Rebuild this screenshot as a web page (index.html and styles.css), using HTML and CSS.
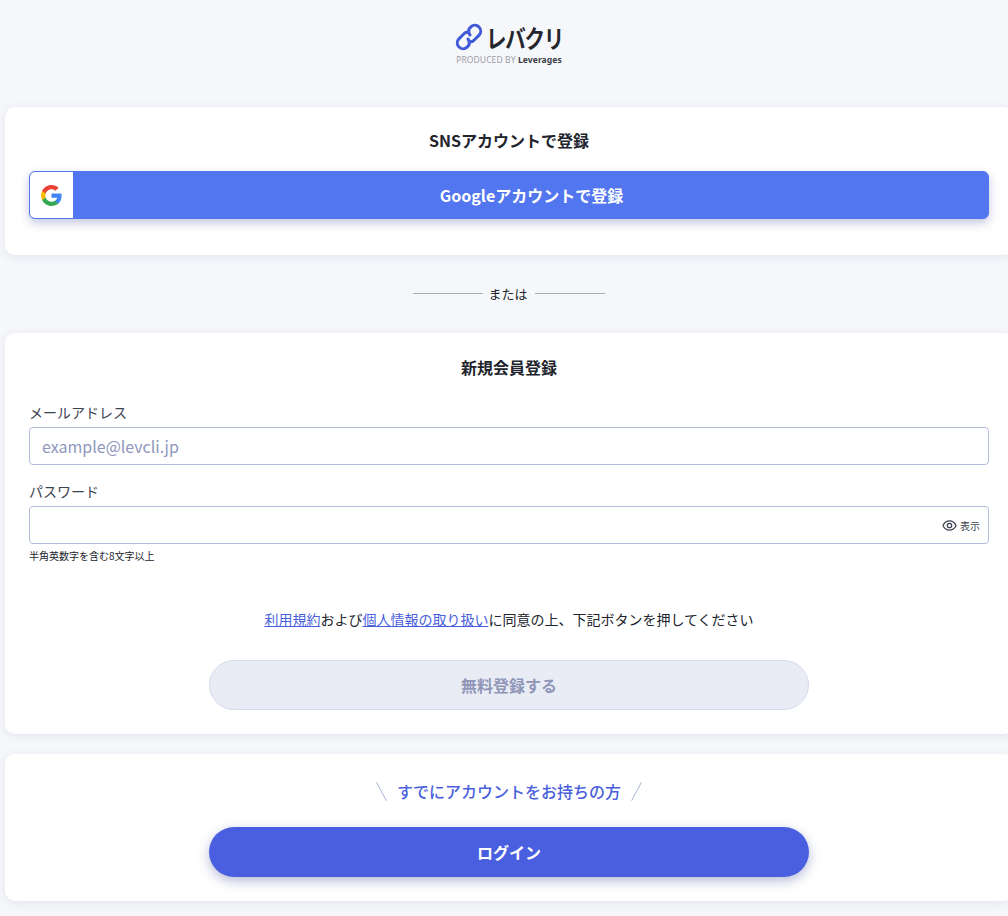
FILE: index.html
```html
<!DOCTYPE html>
<html lang="ja">
<head>
<meta charset="utf-8">
<title>レバクリ 新規会員登録</title>
<link rel="stylesheet" href="styles.css">
</head>
<body>
<main class="page">
  <header class="logo">
    <div class="logo-main">
      <svg class="logo-mark" width="28" height="28" viewBox="0 0 28 28" fill="none" stroke="#4059d8" stroke-width="3" stroke-linecap="round">
        <path d="M15 12 Q13 9.500 14 6 L15.900 3.900 A5.800 5.800 0 0 1 24.100 12.100 L18.500 17.700 Q16.800 19 15 18.500"/>
        <path d="M13 16 Q15 18.500 14 22 L12.100 24.100 A5.800 5.800 0 0 1 3.900 15.900 L9.500 10.300 Q11.200 9 13 9.500"/>
      </svg>
      <span class="logo-name">レバクリ</span>
    </div>
    <div class="logo-sub">PRODUCED BY <b>Leverages</b></div>
  </header>

  <section class="card card-sns">
    <h2 class="card-title">SNSアカウントで登録</h2>
    <a class="google-btn" href="#">
      <span class="google-icon">
        <svg width="23" height="23" viewBox="0 0 48 48">
          <path fill="#4285F4" d="M45.100 24.500c0-1.600-.1-3.100-.4-4.500H24v8.500h11.800c-.5 2.800-2 5.100-4.400 6.700v5.500h7.100c4.200-3.800 6.600-9.500 6.600-16.200z"/>
          <path fill="#34A853" d="M24 46c5.900 0 10.900-2 14.500-5.300l-7.100-5.500c-2 1.300-4.500 2.100-7.400 2.100-5.700 0-10.500-3.800-12.200-9H4.500v5.700C8.100 41.100 15.500 46 24 46z"/>
          <path fill="#FBBC05" d="M11.800 28.300c-.4-1.300-.7-2.800-.7-4.300s.3-3 .7-4.300V14H4.500C3 17 2.200 20.400 2.200 24s.8 7 2.300 10l7.300-5.700z"/>
          <path fill="#EA4335" d="M24 10.700c3.200 0 6.100 1.100 8.400 3.300l6.300-6.300C34.900 4.200 29.900 2 24 2 15.500 2 8.100 6.900 4.500 14l7.300 5.700c1.700-5.200 6.500-9 12.200-9z"/>
        </svg>
      </span>
      <span class="google-label">Googleアカウントで登録</span>
    </a>
  </section>

  <div class="divider"><span>または</span></div>

  <section class="card card-form">
    <h2 class="card-title">新規会員登録</h2>
    <label class="field-label">メールアドレス</label>
    <div class="input"><span class="placeholder">example@levcli.jp</span></div>
    <label class="field-label field-label-pw">パスワード</label>
    <div class="input input-pw">
      <span class="show-pw">
        <svg width="15" height="15" viewBox="0 0 24 24" fill="none" stroke="#3d4250" stroke-width="2">
          <path d="M1.500 12C4 6.800 7.700 4.500 12 4.500S20 6.800 22.500 12C20 17.200 16.300 19.500 12 19.500S4 17.200 1.500 12z"/>
          <circle cx="12" cy="12" r="3.500"/>
        </svg>
        <span>表示</span>
      </span>
    </div>
    <p class="hint">半角英数字を含む8文字以上</p>
    <p class="terms"><a href="#">利用規約</a>および<a href="#">個人情報の取り扱い</a>に同意の上、下記ボタンを押してください</p>
    <button class="btn btn-disabled" type="button">無料登録する</button>
  </section>

  <section class="card card-login">
    <p class="login-lead">すでにアカウントをお持ちの方</p>
    <button class="btn btn-primary" type="button">ログイン</button>
  </section>
</main>
</body>
</html>
```
FILE: styles.css
```css
* { box-sizing: border-box; }
html, body { margin: 0; padding: 0; overflow: hidden; }
body {
  height: 916px;
  background: #f6f7fa;
  color: #21242c;
  font-family: "Noto Sans CJK JP", "Noto Sans", sans-serif;
}
.page { width: 1008px; margin-left: 5px; display: flex; flex-direction: column; }

.logo { height: 107px; padding-top: 22px; display: flex; flex-direction: column; align-items: center; }
.logo-main { display: flex; align-items: center; height: 30px; gap: 3px; }
.logo-name {
  display: inline-block;
  font-size: 25px;
  font-weight: 700;
  line-height: 30px;
  letter-spacing: -1.500px;
  color: #23262d;
  transform: scaleX(.82);
  transform-origin: left center;
  margin-right: -17px;
}
.logo-sub { font-size: 8.500px; line-height: 12px; margin-top: 2px; color: #9a9da6; letter-spacing: .1px; font-family: "Noto Sans", sans-serif; }
.logo-sub b { color: #3a3d45; }

.card {
  background: #fff;
  border-radius: 10px;
  box-shadow: 0 2px 10px rgba(70, 80, 150, .1);
  padding: 0 24px;
  display: flex;
  flex-direction: column;
}
.card-title { margin: 0; font-size: 16px; font-weight: 700; line-height: 24px; text-align: center; }

.card-sns { height: 148px; padding-top: 21px; }
.google-btn {
  margin-top: 19px;
  height: 48px;
  display: flex;
  align-items: center;
  background: #5276f0;
  border: 1px solid #5276f0;
  border-radius: 6px;
  box-shadow: 0 4px 10px rgba(60, 70, 150, .3);
  text-decoration: none;
  overflow: hidden;
}
.google-icon { width: 43px; height: 46px; background: #fff; display: flex; align-items: center; justify-content: center; flex: none; }
.google-label { flex: 1; text-align: center; color: #fff; font-size: 16px; font-weight: 700; line-height: 24px; padding-left: 2px; }

.divider { height: 78px; padding-bottom: 2px; display: flex; align-items: center; justify-content: center; font-size: 13px; gap: 6px; color: #21242c; }
.divider span { margin-left: -1px; margin-right: 1px; }
.divider::before, .divider::after { content: ""; width: 70px; height: 1px; background: #a9acb6; }

.card-form { height: 401px; padding-top: 22px; }
.field-label { display: block; font-size: 14px; line-height: 20px; color: #3d4250; margin-top: 23px; }
.field-label-pw { margin-top: 16px; }
.input {
  margin-top: 5px;
  height: 38px;
  border: 1px solid #b3bcdc;
  border-radius: 4px;
  padding: 0 12px;
  display: flex;
  align-items: center;
  background: #fff;
}
.placeholder { font-size: 16px; line-height: 20px; color: #8f97bd; }
.input-pw { justify-content: flex-end; padding-right: 8px; }
.show-pw { display: flex; align-items: center; gap: 3px; font-size: 10px; color: #3d4250; }
.hint { margin: 5px 0 0; font-size: 10px; line-height: 14px; color: #21242c; }
.terms { margin: 46px 0 0; font-size: 14px; line-height: 20px; text-align: center; }
.terms a { color: #4a5fdc; }

.btn {
  display: block;
  width: 600px;
  height: 50px;
  margin: 0 auto;
  border-radius: 25px;
  font-family: inherit;
  font-size: 16px;
  font-weight: 700;
}
.btn-disabled { margin-top: 31px; background: #e9ecf5; border: 1px solid #d5daec; color: #9096b8; }

.card-login { margin-top: 20px; height: 147px; padding-top: 25px; }
.login-lead {
  margin: 0;
  display: flex;
  justify-content: center;
  align-items: center;
  gap: 15px;
  height: 24px;
  font-size: 16px;
  font-weight: 500;
  color: #4a5fdc;
}
.login-lead::before, .login-lead::after { content: ""; width: 1px; height: 21px; background: #b3bcdc; }
.login-lead::before { transform: rotate(-28deg); }
.login-lead::after { transform: rotate(28deg); }
.btn-primary { margin-top: 24px; background: #4a5fdf; border: none; color: #fff; box-shadow: 0 4px 12px rgba(50, 60, 140, .35); }
```
